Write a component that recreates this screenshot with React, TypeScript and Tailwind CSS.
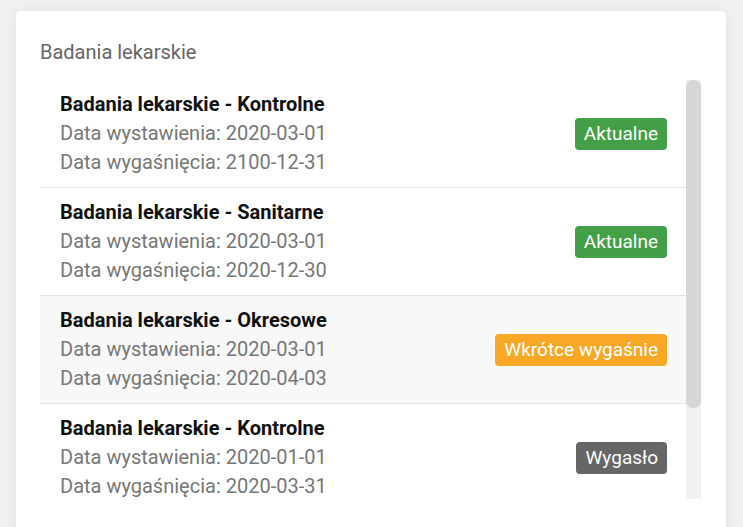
import React from "react";

type Item = {
  title: string;
  issued: string;
  expires: string;
  status: "ok" | "soon" | "expired";
  highlight?: boolean;
};

const items: Item[] = [
  { title: "Badania lekarskie - Kontrolne", issued: "2020-03-01", expires: "2100-12-31", status: "ok" },
  { title: "Badania lekarskie - Sanitarne", issued: "2020-03-01", expires: "2020-12-30", status: "ok" },
  { title: "Badania lekarskie - Okresowe", issued: "2020-03-01", expires: "2020-04-03", status: "soon", highlight: true },
  { title: "Badania lekarskie - Kontrolne", issued: "2020-01-01", expires: "2020-03-31", status: "expired" },
];

function Badge({ status }: { status: Item["status"] }) {
  if (status === "ok")
    return <span className="rounded-[4px] bg-[#43a047] px-[9px] py-[6px] text-[19px] leading-5 text-white">Aktualne</span>;
  if (status === "soon")
    return <span className="rounded-[4px] bg-[#f9a826] px-[9px] py-[6px] text-[19px] leading-5 text-white">Wkrótce wygaśnie</span>;
  return <span className="rounded-[4px] bg-[#666666] px-[9px] py-[6px] text-[19px] leading-5 text-white">Wygasło</span>;
}

export default function App() {
  return (
    <div className="min-h-[527px] h-[527px] overflow-hidden bg-[#f0f0f0] pl-4 pr-[17px] pt-[11px]" style={{ fontFamily: "Roboto, 'Noto Sans', sans-serif" }}>
      <div className="h-[600px] rounded-[5px] bg-white pl-6 pr-[25px] pt-[29px] shadow-[0_0_12px_rgba(0,0,0,0.06)]">
        <div className="text-[20px] leading-6 text-[#666666]">Badania lekarskie</div>
        <div className="mt-4 flex h-[419px]">
          <div className="flex-1 overflow-hidden">
            {items.map((it, i) => (
              <div
                key={i}
                className={`flex items-center justify-between border-b border-[#e3e3e3] pl-5 pr-[19px] py-[10px] ${it.highlight ? "bg-[#f8f8f8]" : "bg-white"}`}
              >
                <div className="text-[20px] leading-[29px]">
                  <div className="font-bold text-[#111111]">{it.title}</div>
                  <div className="text-[#777777]">Data wystawienia: {it.issued}</div>
                  <div className="text-[#777777]">Data wygaśnięcia: {it.expires}</div>
                </div>
                <Badge status={it.status} />
              </div>
            ))}
          </div>
          <div className="w-[15px] bg-[#f1f1f1]">
            <div className="h-[328px] rounded-[7px] bg-[#d6d6d6]" />
          </div>
        </div>
      </div>
    </div>
  );
}
